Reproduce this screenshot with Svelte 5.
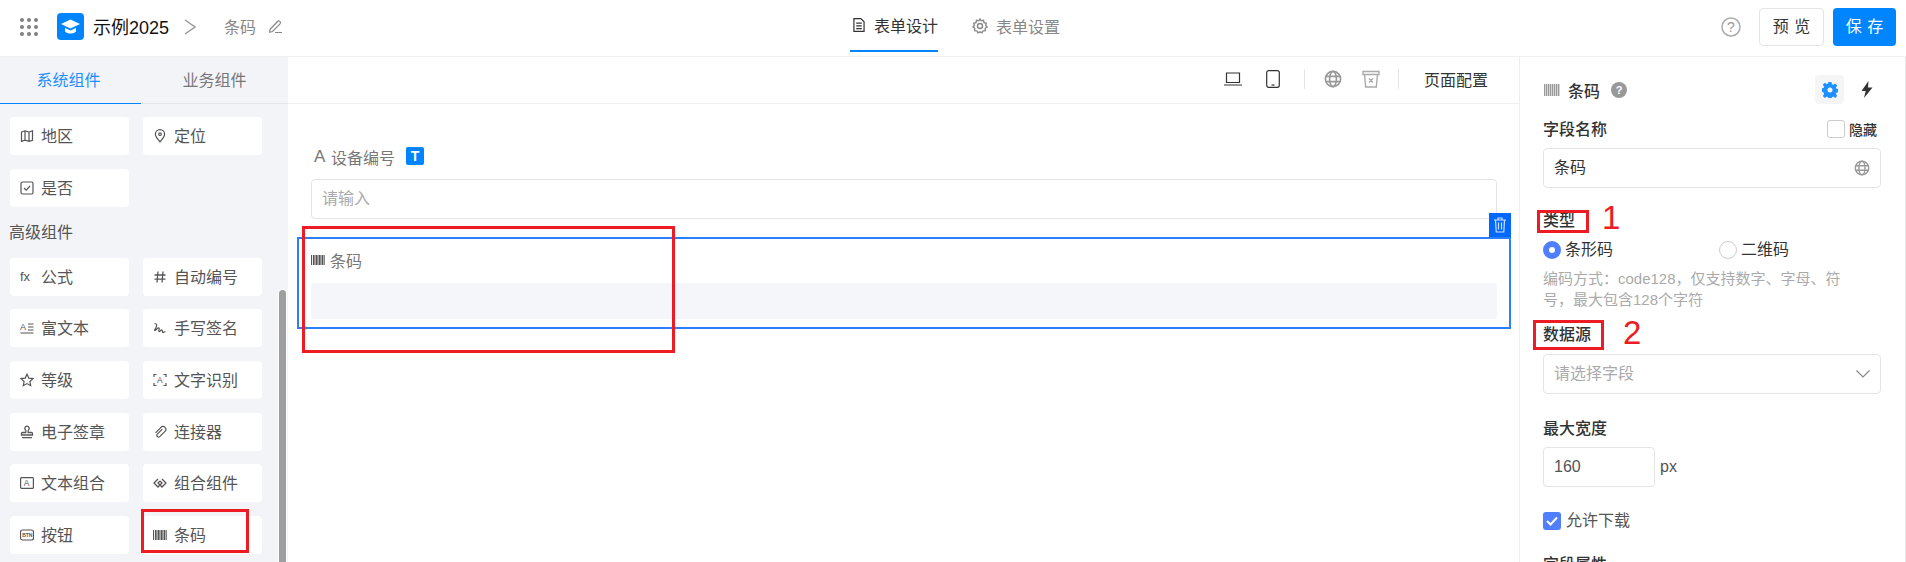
<script>
	const topItems = [
		{ label: '地区', icon: 'map' },
		{ label: '定位', icon: 'pin' },
		{ label: '是否', icon: 'check' }
	];
	const advancedItems = [
		{ label: '公式', icon: 'fx' },
		{ label: '自动编号', icon: 'hash' },
		{ label: '富文本', icon: 'rich' },
		{ label: '手写签名', icon: 'sign' },
		{ label: '等级', icon: 'star' },
		{ label: '文字识别', icon: 'ocr' },
		{ label: '电子签章', icon: 'stamp' },
		{ label: '连接器', icon: 'link' },
		{ label: '文本组合', icon: 'textbox' },
		{ label: '组合组件', icon: 'combo' },
		{ label: '按钮', icon: 'btn' },
		{ label: '条码', icon: 'barcode' }
	];

	const barX = [0, 2, 3.4, 5, 6.4, 8, 9.4, 11, 12.6];
</script>

{#snippet barcode()}
	<svg class="ico" viewBox="0 0 14 12" fill="#555">
		{#each barX as x}
			<rect {x} y="1" width="1.1" height="10" />
		{/each}
	</svg>
{/snippet}

{#snippet globe(size)}
	<svg width={size} height={size} viewBox="0 0 18 18" fill="none" stroke="#999" stroke-width="1.6">
		<circle cx="9" cy="9" r="7.6" />
		<ellipse cx="9" cy="9" rx="3.4" ry="7.6" />
		<path d="M1.8 6.4h14.4M1.8 11.6h14.4" />
	</svg>
{/snippet}

{#snippet icon(name)}
	{#if name === 'barcode'}
		{@render barcode()}
	{:else}
		<svg class="ico" viewBox="0 0 14 14" fill="none" stroke="#555" stroke-width="1.2">
			{#if name === 'map'}
				<path d="M1.5 3l3.5-1.2 4 1.2 3.5-1.2v9.4L9 12.4 5 11.2 1.5 12.4zM5 1.8v9.4M9 3v9.4" />
			{:else if name === 'pin'}
				<path d="M7 13C4.6 9.8 2.4 7.6 2.4 5.2a4.6 4.6 0 0 1 9.2 0C11.600 7.600 9.400 9.800 7 13z" />
				<circle cx="7" cy="5.200" r="1.300" />
			{:else if name === 'check'}
				<rect x="1" y="1" width="12" height="12" rx="1.500" />
				<path d="M4 7l2.200 2.200L10 5" />
			{:else if name === 'fx'}
				<text x="0" y="11" font-size="13" fill="#555" stroke="none" font-family="Liberation Sans, sans-serif">fx</text>
			{:else if name === 'hash'}
				<path d="M5 1.500L4 12.500M10 1.500L9 12.500M1.500 5h11M1.500 9.200h11" stroke-width="1.300" />
			{:else if name === 'rich'}
				<text x="0" y="8.500" font-size="9" fill="#555" stroke="none" font-family="Liberation Sans, sans-serif">A</text>
				<path d="M8 3h5.500M8 6h5.500M8 9h5.500M0.500 12h13" />
			{:else if name === 'sign'}
				<path d="M1.500 2.500c2.500 0 2.500 2 1.500 4S1 9.500 2 9.500s3-3.500 4-2.500-1 3 0 3.500 2-2 3-1.500 0 2.500 1 2.500 1.500-1 2.500-1" />
			{:else if name === 'star'}
				<path d="M7 1.200l1.800 3.900 4.200.5-3.100 2.900.8 4.200L7 10.600l-3.700 2.100.8-4.200L1 5.600l4.200-.5z" />
			{:else if name === 'ocr'}
				<path d="M1 4V1.500h2.500M10.500 1.500H13V4M13 10v2.500h-2.500M3.500 12.500H1V10" />
				<text x="4" y="10" font-size="8.500" fill="#555" stroke="none" font-family="Liberation Sans, sans-serif">A</text>
			{:else if name === 'stamp'}
				<path d="M7 1.200a2.200 2.200 0 0 1 1.400 3.900c-.3.300-.4 1-.2 2.400h3.300c.6 0 1 .4 1 1v1.500H1.500V8.500c0-.6.400-1 1-1h3.300c.2-1.400.1-2.100-.2-2.400A2.200 2.200 0 0 1 7 1.200zM2 12.600h10" fill="none" stroke-width="1.300" />
			{:else if name === 'link'}
				<path d="M8.800 3.200l-5 5a1.700 1.700 0 0 0 2.400 2.400l5.300-5.300a2.800 2.800 0 0 0-4-4L2 6.800" transform="translate(0.500 1)" />
			{:else if name === 'textbox'}
				<rect x="0.600" y="1.600" width="12.800" height="10.800" rx="1" />
				<text x="3.800" y="10" font-size="8.500" fill="#555" stroke="none" font-family="Liberation Sans, sans-serif">A</text>
			{:else if name === 'combo'}
				<path d="M5 3L1 7l4 4 4-4-2-2M9 3l4 4-4 4-4-4 2-2" stroke-width="1.300" />
			{:else if name === 'btn'}
				<rect x="0.500" y="2" width="13" height="10" rx="2" />
				<text x="2.200" y="9" font-size="5" font-weight="700" fill="#555" stroke="none" font-family="Liberation Sans, sans-serif">BTN</text>
			{/if}
		</svg>
	{/if}
{/snippet}

{#snippet card(item)}
	<div class="card">
		{@render icon(item.icon)}
		<span>{item.label}</span>
	</div>
{/snippet}

<div class="app">
	<header class="topbar">
		<div class="brand">
			<svg class="apps" width="18" height="18" viewBox="0 0 18 18" fill="#808080">
				{#each [2, 9, 16] as cy}
					{#each [2, 9, 16] as cx}
						<circle {cx} {cy} r="2" />
					{/each}
				{/each}
			</svg>
			<svg class="logo" width="27" height="27" viewBox="0 0 27 27">
				<rect width="27" height="27" rx="4" fill="#0085ff" />
				<path d="M13.500 6.500L23 11l-9.500 4.500L4 11z" fill="#fff" />
				<path d="M8 15v3.500c1.500 1.500 3.500 2 5.500 2s4-.5 5.500-2V15l-5.500 2.600z" fill="#fff" />
			</svg>
			<span class="title">示例2025</span>
			<svg class="crumb" width="12" height="16" viewBox="0 0 12 16" fill="none" stroke="#999" stroke-width="1.500">
				<path d="M1 1l10 7-10 7" />
			</svg>
			<span class="formname">条码</span>
			<svg width="15" height="15" viewBox="0 0 15 15" fill="none" stroke="#888" stroke-width="1.200">
				<path d="M2 10.500L9.500 2.500a1.500 1.500 0 0 1 2.500 2.300L4.500 12.500l-2.800.8zM7 13.500h7" />
			</svg>
		</div>

		<nav class="modes">
			<div class="mode active">
				<svg width="13" height="16" viewBox="0 0 13 16" fill="none" stroke="#333" stroke-width="1.300">
					<path d="M1 1h7.500L12 4.500V15H1zM3.500 6h6M3.500 9h6M3.500 12h6" />
				</svg>
				<span>表单设计</span>
			</div>
			<div class="mode">
				<svg width="16" height="16" viewBox="0 0 16 16" fill="none" stroke="#888" stroke-width="1.400">
					<path d="M8 1l1.300 1.800 2.200-.4.500 2.200 2.200.6-.5 2.200L15 9l-1.800 1.300.1 2.300-2.300.2-1 2L8 13.800 5.900 14.800l-1-2-2.300-.2.100-2.300L1 9l1.300-1.600-.5-2.200 2.200-.6.500-2.200 2.200.4z" />
					<circle cx="8" cy="8" r="2.500" />
				</svg>
				<span>表单设置</span>
			</div>
		</nav>

		<div class="actions">
			<svg class="help" width="20" height="20" viewBox="0 0 20 20" fill="none">
				<circle cx="10" cy="10" r="9" stroke="#aaa" stroke-width="1.500" />
				<text x="10" y="15" text-anchor="middle" font-size="14" fill="#999" font-family="Liberation Sans, sans-serif">?</text>
			</svg>
			<button class="btn ghost">预 览</button>
			<button class="btn primary">保 存</button>
		</div>
	</header>

	<div class="body">
		<aside class="sidebar">
			<div class="side-tabs">
				<div class="side-tab active">系统组件</div>
				<div class="side-tab">业务组件</div>
			</div>
			<div class="palette">
				<div class="grid">
					{#each topItems as item}
						{@render card(item)}
					{/each}
				</div>
				<div class="group-title">高级组件</div>
				<div class="grid">
					{#each advancedItems as item}
						{@render card(item)}
					{/each}
				</div>
			</div>
			<div class="scrollbar"></div>
		</aside>

		<main class="canvas">
			<div class="toolbar">
				<svg width="18" height="14" viewBox="0 0 18 14" fill="none" stroke="#333" stroke-width="1.200">
					<path d="M2.500 1h13v9.500h-13zM0 13h18" />
				</svg>
				<svg class="phone" width="14" height="18" viewBox="0 0 14 18" fill="none" stroke="#333" stroke-width="1.200">
					<rect x="0.700" y="0.700" width="12.600" height="16.600" rx="2" />
					<path d="M5.500 15h3" />
				</svg>
				<span class="sep first"></span>
				{@render globe(18)}
				<svg class="archive" width="18" height="18" viewBox="0 0 18 18" fill="none" stroke="#aaa" stroke-width="1.400">
					<path d="M1 1.500h16v3H1zM2.500 4.500l1.200 12.500h10.600l1.200-12.500M7 8.500l4 4M11 8.500l-4 4" />
				</svg>
				<span class="sep"></span>
				<span class="page-config">页面配置</span>
			</div>

			<div class="form">
				<div class="field-label">
					<span class="type-a">A</span>
					<span>设备编号</span>
					<span class="badge">T</span>
				</div>
				<div class="fake-input">请输入</div>

				<div class="selected">
					<div class="tag">
						<svg width="14" height="16" viewBox="0 0 14 16" fill="none" stroke="#cfe0ff" stroke-width="1.200">
							<path d="M1 3h12M5 3V1h4v2M2.500 3l.7 12h7.600l.7-12M5.500 5.500v7M8.500 5.500v7" />
						</svg>
					</div>
					<div class="selected-label">
						{@render barcode()}
						<span>条码</span>
					</div>
					<div class="barcode-slot"></div>
				</div>
			</div>
		</main>

		<aside class="panel">
			<div class="panel-head">
				<svg width="16" height="12" viewBox="0 0 16 12" fill="#999">
					{#each [0, 2, 4, 6, 8, 10, 12, 14] as x}
						<rect {x} y="0" width="1.400" height="12" />
					{/each}
				</svg>
				<strong>条码</strong>
				<svg class="head-help" width="16" height="16" viewBox="0 0 16 16">
					<circle cx="8" cy="8" r="8" fill="#999" />
					<text x="8" y="12" text-anchor="middle" font-size="11" font-weight="700" fill="#fff" font-family="Liberation Sans, sans-serif">?</text>
				</svg>
				<span class="grow"></span>
				<span class="tool on">
					<svg width="16" height="16" viewBox="0 0 16 16" fill="#1e90ff">
						<path fill-rule="evenodd" d="M6.500 0h3l.4 2.200 1.400.6 1.900-1.300 2 2-1.300 1.900.6 1.400 2.200.4v3l-2.200.4-.6 1.400 1.300 1.900-2 2-1.900-1.300-1.400.6-.4 2.200h-3l-.4-2.200-1.400-.6-1.900 1.300-2-2 1.300-1.900-.6-1.400L-.7 9.500v-3l2.200-.4.600-1.400L.8 2.800l2-2 1.900 1.300 1.400-.6zM8 5.500a2.500 2.500 0 1 0 0 5 2.500 2.500 0 0 0 0-5z" />
					</svg>
				</span>
				<span class="tool">
					<svg width="12" height="17" viewBox="0 0 12 17" fill="#333">
						<path d="M7.500 0L0.500 10h4.200L3 17 11.500 6.500H7z" />
					</svg>
				</span>
			</div>

			<div class="row name-row">
				<span class="label">字段名称</span>
				<label class="hide-toggle">
					<span class="box"></span>
					<span>隐藏</span>
				</label>
			</div>
			<div class="input name-input">
				<span>条码</span>
				{@render globe(16)}
			</div>

			<div class="label type-label">类型</div>
			<div class="radios">
				<span class="radio on"></span>
				<span class="radio-text">条形码</span>
				<span class="radio off"></span>
				<span class="radio-text">二维码</span>
			</div>
			<p class="hint">编码方式：code128，仅支持数字、字母、符<br />号，最大包含128个字符</p>

			<div class="label source-label">数据源</div>
			<div class="input select">
				<span>请选择字段</span>
				<svg width="14" height="8" viewBox="0 0 14 8" fill="none" stroke="#888" stroke-width="1.200">
					<path d="M0.500 0.500L7 7l6.500-6.500" />
				</svg>
			</div>

			<div class="label width-label">最大宽度</div>
			<div class="width-row">
				<div class="input width-input">160</div>
				<span>px</span>
			</div>

			<div class="download">
				<span class="box checked">
					<svg width="12" height="10" viewBox="0 0 12 10" fill="none" stroke="#fff" stroke-width="2">
						<path d="M1 5l3.500 3.500L11 1.500" />
					</svg>
				</span>
				<span>允许下载</span>
			</div>

			<div class="label attr-label">字段属性</div>
		</aside>
	</div>

	<!-- hand drawn annotations sitting on top of the screenshot -->
	<div class="mark mark-item"></div>
	<div class="mark mark-field"></div>
	<div class="mark mark-type"></div>
	<div class="mark mark-source"></div>
	<span class="mark-num num-1">1</span>
	<span class="mark-num num-2">2</span>
</div>

<style>
	:global(body) {
		margin: 0;
		background: #fff;
		overflow: hidden;
	}

	.app {
		position: relative;
		height: 562px;
		overflow: hidden;
		font-family: 'Liberation Sans', 'Noto Sans CJK SC', sans-serif;
		font-size: 16px;
		color: #333;
	}

	.topbar {
		display: grid;
		grid-template-columns: 1fr auto 1fr;
		height: 56px;
		border-bottom: 1px solid #f0f0f0;
	}

	.brand {
		display: flex;
		align-items: center;
		padding-left: 20px;
		padding-bottom: 3px;
	}

	.logo {
		margin-left: 19px;
	}

	.title {
		margin-left: 9px;
		margin-top: -2px;
		font-size: 18px;
		color: #111;
	}

	.crumb {
		margin-left: 15px;
	}

	.formname {
		margin-left: 28px;
		margin-right: 12px;
		margin-top: -2px;
		color: #888;
	}

	.modes {
		display: flex;
		gap: 34px;
		margin-left: 4px;
	}

	.mode {
		display: flex;
		align-items: center;
		gap: 8px;
		height: 52px;
		color: #888;
	}

	.mode.active {
		box-sizing: border-box;
		width: 88px;
		padding-left: 3px;
		gap: 9px;
		color: #333;
		white-space: nowrap;
		border-bottom: 2px solid #0085ff;
	}

	.actions {
		display: flex;
		align-items: center;
		justify-content: flex-end;
		padding-right: 10px;
		padding-bottom: 3px;
	}

	.help {
		margin-right: 18px;
	}

	.btn {
		height: 38px;
		padding: 0 0 3px;
		border-radius: 4px;
		font: inherit;
		word-spacing: 1px;
		cursor: pointer;
	}

	.btn.ghost {
		width: 65px;
		margin-right: 9px;
		border: 1px solid #e4e4e4;
		background: #fff;
		color: #333;
	}

	.btn.primary {
		width: 63px;
		border: 0;
		background: #0085ff;
		color: #fff;
	}

	.body {
		display: flex;
		height: 505px;
	}

	.sidebar {
		position: relative;
		flex: none;
		width: 288px;
		background: #f3f4f8;
	}

	.side-tabs {
		display: flex;
		height: 47px;
		box-sizing: border-box;
		border-bottom: 1px solid #e4e6ec;
	}

	.side-tab {
		flex: 1;
		line-height: 48px;
		text-align: center;
		color: #777;
	}

	.side-tab.active {
		flex: none;
		width: 141px;
		padding-right: 4px;
		box-sizing: border-box;
		margin-bottom: -1px;
		border-bottom: 1px solid #0085ff;
		color: #1e8fff;
	}

	.palette {
		padding: 13px 0 0 10px;
	}

	.grid {
		display: grid;
		grid-template-columns: 119px 119px;
		column-gap: 14px;
		row-gap: 13.7px;
	}

	.card {
		display: flex;
		align-items: center;
		gap: 7px;
		height: 38px;
		padding-left: 10px;
		background: #fff;
		border-radius: 4px;
		color: #555;
		line-height: 20px;
	}

	.card span {
		padding-top: 2px;
	}

	.ico {
		flex: none;
		width: 14px;
		height: 14px;
	}

	.group-title {
		height: 51px;
		line-height: 51px;
		margin-left: -1px;
		color: #555;
	}

	.scrollbar {
		position: absolute;
		left: 279px;
		top: 233px;
		width: 7px;
		height: 300px;
		background: #9e9e9e;
		border-radius: 4px 4px 0 0;
		box-shadow: 0 0 0 1px #fff;
	}

	.canvas {
		flex: 1;
		min-width: 0;
	}

	.toolbar {
		display: flex;
		align-items: center;
		justify-content: flex-end;
		height: 47px;
		box-sizing: border-box;
		padding-right: 31px;
		padding-bottom: 3px;
		border-bottom: 1px solid #f0f0f0;
	}

	.phone {
		margin-left: 24px;
	}

	.sep {
		width: 1px;
		height: 20px;
		background: #e4e4e4;
	}

	.sep.first {
		margin: 0 19px 0 24px;
	}

	.archive {
		margin-left: 20px;
	}

	.sep:not(.first) {
		margin: 0 25px 0 18px;
	}

	.page-config {
		color: #333;
	}

	.form {
		padding: 43px 22px 0 23px;
	}

	.field-label {
		display: flex;
		align-items: center;
		height: 20px;
		color: #777;
	}

	.type-a {
		width: 20px;
		padding-left: 3px;
		box-sizing: border-box;
		font-size: 17px;
	}

	.badge {
		width: 18px;
		height: 18px;
		margin-left: 11px;
		margin-top: -2px;
		border-radius: 2px;
		background: #0085ff;
		color: #fff;
		font-size: 14px;
		font-weight: 700;
		line-height: 18px;
		text-align: center;
	}

	.fake-input {
		box-sizing: border-box;
		height: 40px;
		margin-top: 12px;
		padding-left: 10px;
		border: 1px solid #e4e4e4;
		border-radius: 4px;
		color: #aaa;
		line-height: 38px;
	}

	.selected {
		position: relative;
		box-sizing: border-box;
		height: 92px;
		margin: 18px -14px 0;
		padding: 11px 12px 0;
		border: 2px solid #2a7fff;
	}

	.tag {
		position: absolute;
		top: -26px;
		right: -2px;
		display: flex;
		align-items: center;
		justify-content: center;
		width: 22px;
		height: 24px;
		background: #0068ff;
	}

	.selected-label {
		display: flex;
		align-items: center;
		gap: 5px;
		height: 20px;
		color: #777;
	}

	.barcode-slot {
		height: 36px;
		margin-top: 13px;
		border-radius: 4px;
		background: #f5f6fa;
	}

	.panel {
		flex: none;
		box-sizing: border-box;
		width: 387px;
		padding: 18px 24px 0 23px;
		border-left: 1px solid #eee;
		border-right: 1px solid #e8e8e8;
		color: #333;
	}

	.panel-head {
		display: flex;
		align-items: center;
		height: 29px;
	}

	.panel-head svg:first-child {
		margin-left: 1px;
	}

	.panel-head strong {
		margin-left: 8px;
		font-weight: 500;
	}

	.head-help {
		margin-left: 11px;
	}

	.grow {
		flex: 1;
	}

	.tool {
		display: flex;
		align-items: center;
		justify-content: center;
		width: 29px;
		height: 29px;
		border-radius: 4px;
	}

	.tool.on {
		margin-right: 8px;
		background: #f5f5f5;
	}

	.label {
		height: 22px;
		font-weight: 500;
		line-height: 22px;
		color: #333;
	}

	.row {
		display: flex;
		align-items: center;
		justify-content: space-between;
	}

	.name-row {
		height: 18px;
		margin-top: 16px;
	}

	.name-row .label {
		margin-top: 1px;
	}

	.hide-toggle {
		display: flex;
		align-items: center;
		gap: 4px;
		padding-right: 4px;
		font-size: 14px;
		font-weight: 500;
	}

	.box {
		box-sizing: border-box;
		display: flex;
		align-items: center;
		justify-content: center;
		width: 18px;
		height: 18px;
		border: 1px solid #ccc;
		border-radius: 3px;
	}

	.box.checked {
		border: 0;
		background: #4f7fff;
	}

	.input {
		box-sizing: border-box;
		display: flex;
		align-items: center;
		justify-content: space-between;
		height: 40px;
		padding: 0 10px 1px;
		border: 1px solid #e4e4e4;
		border-radius: 4px;
		line-height: 20px;
	}

	.name-input {
		margin-top: 10px;
		padding-bottom: 0;
	}

	.type-label {
		margin-top: 22px;
	}

	.radios {
		display: flex;
		align-items: center;
		height: 19px;
		margin-top: 8px;
		line-height: 19px;
	}

	.radio {
		box-sizing: border-box;
		width: 18px;
		height: 18px;
		border-radius: 50%;
	}

	.radio.on {
		border: 6px solid #4f7fff;
		background: #fff;
	}

	.radio.off {
		border: 1px solid #ccc;
		margin-left: 106px;
	}

	.radio-text {
		margin-left: 4px;
	}

	.hint {
		margin: 9px 0 0;
		color: #aaa;
		font-size: 15px;
		line-height: 21px;
	}

	.source-label {
		margin-top: 14px;
	}

	.select {
		margin-top: 8px;
		color: #aaa;
	}

	.width-label {
		margin-top: 24px;
	}

	.width-row {
		display: flex;
		align-items: center;
		gap: 5px;
		margin-top: 7px;
		color: #555;
	}

	.width-input {
		width: 112px;
	}

	.download {
		display: flex;
		align-items: center;
		gap: 5px;
		height: 18px;
		margin-top: 25px;
		color: #555;
		line-height: 18px;
	}

	.attr-label {
		margin-top: 24px;
	}

	.mark {
		position: absolute;
		box-sizing: border-box;
		border: 3px solid #ed1c24;
	}

	.mark-item {
		left: 141px;
		top: 509px;
		width: 108px;
		height: 44px;
	}

	.mark-field {
		left: 302px;
		top: 226px;
		width: 373px;
		height: 127px;
	}

	.mark-type {
		left: 1537px;
		top: 210px;
		width: 52px;
		height: 23px;
	}

	.mark-source {
		left: 1533px;
		top: 320px;
		width: 71px;
		height: 30px;
	}

	.mark-num {
		position: absolute;
		color: #ed1c24;
		font-size: 33px;
		line-height: 33px;
	}

	.num-1 {
		left: 1602px;
		top: 201px;
	}

	.num-2 {
		left: 1623px;
		top: 316px;
	}
</style>
